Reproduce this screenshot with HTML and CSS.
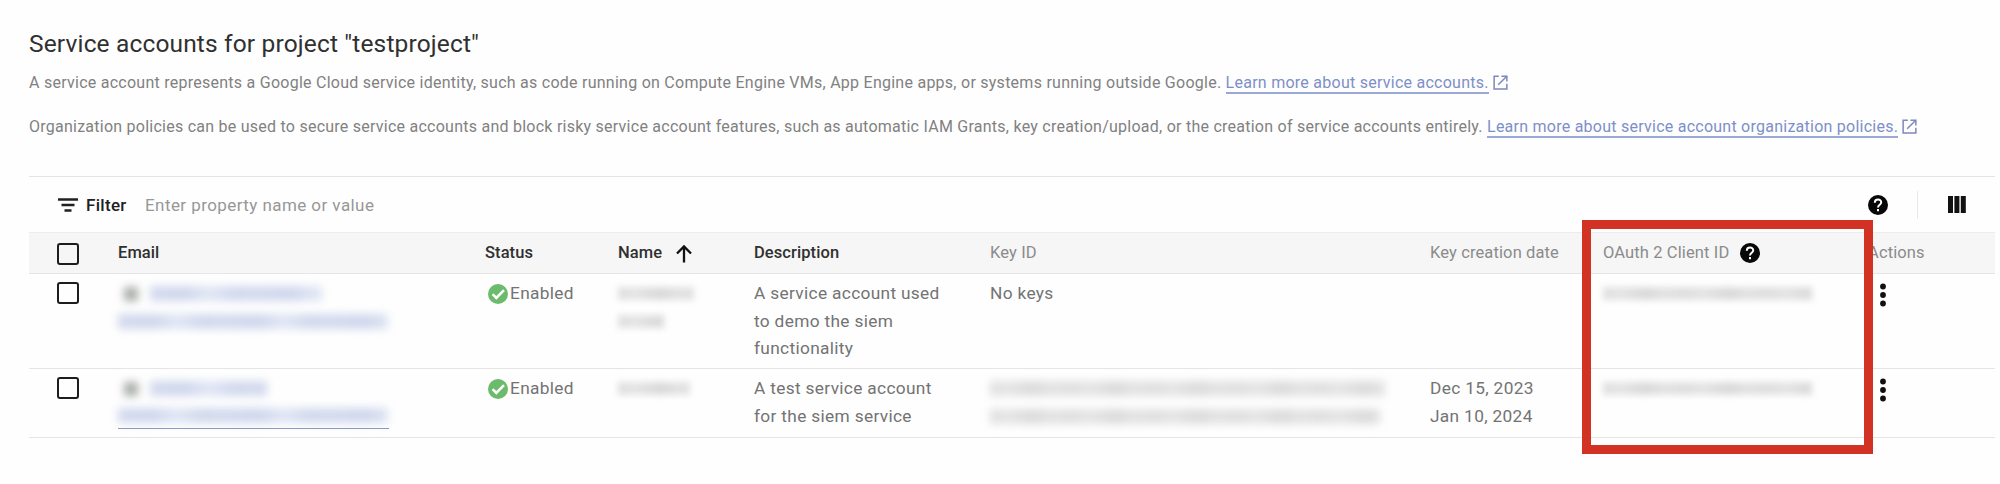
FILE: index.html
```html
<!DOCTYPE html>
<html lang="en">
<head>
<meta charset="utf-8">
<title>Service accounts</title>
<link rel="stylesheet" href="styles.css">
</head>
<body>
<svg class="defs" width="0" height="0" aria-hidden="true">
  <symbol id="help" viewBox="0 0 20 20"><circle cx="10" cy="10" r="10" fill="#080808"/><path d="M6.8 7.8C6.8 3.4 13.3 3.7 13.2 7.5C13.1 9.7 10 9.8 10 12.4" fill="none" stroke="#fff" stroke-width="2"/><path d="M9 14h2v2.2H9z" fill="#fff"/></symbol>
  <symbol id="open" viewBox="0 0 16 16"><path d="M6.2 1.2H1.2v13.6h13.6V9.2M9 1.2h5.8v5.8M14.5 1.5L5.5 10.5" fill="none" stroke="currentColor" stroke-width="1.6"/></symbol>
  <symbol id="check" viewBox="0 0 20 20"><circle cx="10" cy="10" r="10" fill="#6abb6b"/><path d="M4.6 10.2l3.7 3.7L16 6.2" fill="none" stroke="#fff" stroke-width="2.6"/></symbol>
  <symbol id="dots" viewBox="0 0 8 24"><circle cx="4" cy="3.5" r="2.9"/><circle cx="4" cy="12" r="2.9"/><circle cx="4" cy="20.5" r="2.9"/></symbol>
</svg>
<main class="page">
  <h1 class="title">Service accounts for project "testproject"</h1>
  <p class="intro intro-a">A service account represents a Google Cloud service identity, such as code running on Compute Engine VMs, App Engine apps, or systems running outside Google. <a class="link">Learn more about service accounts.</a><svg class="open"><use href="#open"/></svg></p>
  <p class="intro intro-b">Organization policies can be used to secure service accounts and block risky service account features, such as automatic IAM Grants, key creation/upload, or the creation of service accounts entirely. <a class="link">Learn more about service account organization policies.</a><svg class="open"><use href="#open"/></svg></p>
  <section class="panel">
    <div class="toolbar">
      <svg class="filter-icon" viewBox="0 0 20 14"><path d="M0 1.5h20M3.5 7h13M6.5 12.5h7" stroke="#202020" stroke-width="2.4"/></svg>
      <span class="filter-label">Filter</span>
      <span class="placeholder">Enter property name or value</span>
      <svg class="help"><use href="#help"/></svg>
      <span class="divider"></span>
      <svg class="columns" viewBox="0 0 18 17"><path d="M0 0h5v17H0zM6.4 0h5v17h-5zM12.8 0h5v17h-5z" fill="#111"/></svg>
    </div>
    <div class="row head">
      <div class="cell"><span class="box"></span></div>
      <div class="cell strong">Email</div>
      <div class="cell strong">Status</div>
      <div class="cell strong name-head">Name<svg class="arrow" viewBox="0 0 16 18"><path d="M8 18V2M1 9l7-7 7 7" fill="none" stroke="#111" stroke-width="2.3"/></svg></div>
      <div class="cell strong desc-head">Description</div>
      <div class="cell">Key ID</div>
      <div class="cell">Key creation date</div>
      <div class="cell oauth-head">OAuth 2 Client ID<svg class="help"><use href="#help"/></svg></div>
      <div class="cell">Actions</div>
    </div>
    <div class="row first">
      <div class="cell"><span class="box"></span></div>
      <div class="cell redacted"><div class="line"><i class="icon-smudge"></i><i class="smudge blue e1"></i></div><div class="line"><i class="smudge blue e2"></i></div></div>
      <div class="cell status"><svg class="check"><use href="#check"/></svg>Enabled</div>
      <div class="cell redacted"><div class="line"><i class="smudge n1"></i></div><div class="line"><i class="smudge n2"></i></div></div>
      <div class="cell">A service account used<br>to demo the siem<br>functionality</div>
      <div class="cell">No keys</div>
      <div class="cell"></div>
      <div class="cell redacted"><div class="line"><i class="smudge o1"></i></div></div>
      <div class="cell"><svg class="dots"><use href="#dots"/></svg></div>
    </div>
    <div class="row second">
      <div class="cell"><span class="box"></span></div>
      <div class="cell redacted"><div class="line"><i class="icon-smudge"></i><i class="smudge blue e3"></i></div><div class="line underlined"><i class="smudge blue e2"></i></div></div>
      <div class="cell status"><svg class="check"><use href="#check"/></svg>Enabled</div>
      <div class="cell redacted"><div class="line"><i class="smudge n3"></i></div></div>
      <div class="cell">A test service account<br>for the siem service</div>
      <div class="cell redacted"><div class="line"><i class="smudge key k1"></i></div><div class="line"><i class="smudge key k2"></i></div></div>
      <div class="cell date">Dec 15, 2023<br>Jan 10, 2024</div>
      <div class="cell redacted"><div class="line"><i class="smudge o1"></i></div></div>
      <div class="cell"><svg class="dots"><use href="#dots"/></svg></div>
    </div>
  </section>
</main>
<div class="highlight"></div>
</body>
</html>
```
FILE: styles.css
```css
* { box-sizing: border-box; }
body { margin: 0; background: #fefefe; font-family: Roboto, "Liberation Sans", sans-serif; color: #737373; height: 484px; overflow: hidden; }
.defs { position: absolute; }
.page { width: 1995px; padding: 28px 0 0 29px; }
.title { margin: 0; font-size: 24.5px; font-weight: 400; line-height: 32px; letter-spacing: 0.15px; color: #303030; white-space: nowrap; }
.intro { margin: 0; font-size: 16px; line-height: 24px; white-space: nowrap; color: #818181; }
.intro-a { margin-top: 11px; letter-spacing: 0.255px; }
.intro-b { margin-top: 20px; letter-spacing: 0.246px; }
.link { color: #7d8fc9; border-bottom: 2px solid #9aa8d6; }
.open { width: 15px; height: 15px; margin-left: 4px; vertical-align: -2px; color: #7d88bd; }
.panel { margin-top: 37px; border-top: 1px solid #e4e4e4; }
.toolbar { height: 55px; display: flex; align-items: center; padding: 0 29px; }
.filter-icon { width: 20px; height: 14px; }
.filter-label { font-size: 17px; font-weight: 500; letter-spacing: 0.3px; color: #202020; margin-left: 8px; width: 59px; }
.placeholder { font-size: 17px; letter-spacing: 0.43px; color: #979797; flex: 1; }
.help { width: 20px; height: 20px; flex: none; }
.divider { width: 1px; height: 28px; background: #e9e9e9; margin: 0 30px 0 29px; }
.columns { width: 18px; height: 17px; }
.row { display: grid; grid-template-columns: 89px 367px 133px 136px 236px 440px 173px 265px 1fr; border-bottom: 1px solid #e5e5e5; font-size: 17.3px; line-height: 27.5px; }
.cell { white-space: nowrap; letter-spacing: 0.33px; }
.head { height: 42px; background: #f6f6f6; border-top: 1px solid #ececec; color: #8b8b8b; font-size: 16.5px; padding-top: 6px; }
.head .cell { letter-spacing: 0.12px; }
.first { height: 95px; padding-top: 6px; }
.second { height: 69px; padding-top: 6px; }
.head .strong { color: #303030; font-weight: 500; letter-spacing: 0.08px; }
.box { display: block; width: 22px; height: 22px; border: 2.5px solid #1d1d1d; border-radius: 3px; margin: 2px 0 0 28px; }
.head .box { margin-top: 4px; }
.name-head, .oauth-head, .status { display: flex; align-items: center; height: 28px; }
.arrow { width: 16px; height: 19px; margin-left: 14px; }
.oauth-head .help { margin-left: 11px; }
.check { width: 20px; height: 20px; margin: 0 2px 0 3px; }
.dots { display: block; width: 8px; height: 24px; margin: 3px 0 0 11px; fill: #111; }
.line { height: 27.5px; display: flex; align-items: center; }
.underlined { width: 271px; height: 26px; border-bottom: 1.5px solid #8592c2; }
.smudge { height: 13px; filter: blur(3px); background: repeating-linear-gradient(90deg, #dfdfdf 0, #e5e5e5 17px, #dadada 43px, #e3e3e3 61px, #dfdfdf 83px); }
.blue { height: 15px; filter: blur(4px); background: repeating-linear-gradient(90deg, #d3daee 0, #cfd7ec 35px, #e0e6f4 59px, #d1d9ed 83px, #d3daee 107px); }
.icon-smudge { width: 14px; height: 14px; margin: 0 12px 0 6px; background: #a8aea8; filter: blur(4px); }
.e1 { width: 172px; }
.e2 { width: 270px; }
.e3 { width: 117px; }
.n1 { width: 76px; }
.n2 { width: 46px; }
.n3 { width: 72px; }
.o1 { width: 209px; }
.key { filter: blur(4.5px); height: 15px; }
.k1 { width: 395px; }
.k2 { width: 390px; }
.highlight { position: absolute; left: 1582px; top: 220px; width: 291px; height: 234px; border: 9px solid #d13224; }
```
